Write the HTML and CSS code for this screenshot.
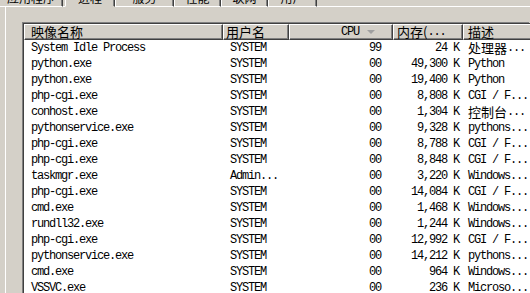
FILE: index.html
```html
<!DOCTYPE html>
<html lang="zh-CN">
<head>
<meta charset="utf-8">
<title>任务管理器 - 进程</title>
<link rel="stylesheet" href="styles.css">
</head>
<body>
<div class="tabbar">
  <div class="tab t1">应用程序</div>
  <div class="tab-gap"></div>
  <div class="tab t2 selected">进程</div>
  <div class="tab t3">服务</div>
  <div class="tab t4">性能</div>
  <div class="tab t5">联网</div>
  <div class="tab t6">用户</div>
  <div class="tab-fill"></div>
</div>
<div class="panel">
  <div class="list">
    <div class="header">
      <div class="hcell c-name"><span class="cjk">映像名称</span></div>
      <div class="hcell c-user"><span class="cjk">用户名</span></div>
      <div class="hcell c-cpu">CPU<span class="sort"></span></div>
      <div class="hcell c-mem"><span class="cjk">内存(</span>...</div>
      <div class="hcell c-desc"><span class="cjk">描述</span></div>
    </div>
    <div class="rows">
      <div class="row"><span class="c-name">System Idle Process</span><span class="c-user">SYSTEM</span><span class="c-cpu">99</span><span class="c-mem">24 K</span><span class="c-desc"><span class="cjk">处理器</span>...</span></div>
      <div class="row"><span class="c-name">python.exe</span><span class="c-user">SYSTEM</span><span class="c-cpu">00</span><span class="c-mem">49,300 K</span><span class="c-desc">Python</span></div>
      <div class="row"><span class="c-name">python.exe</span><span class="c-user">SYSTEM</span><span class="c-cpu">00</span><span class="c-mem">19,400 K</span><span class="c-desc">Python</span></div>
      <div class="row"><span class="c-name">php-cgi.exe</span><span class="c-user">SYSTEM</span><span class="c-cpu">00</span><span class="c-mem">8,808 K</span><span class="c-desc">CGI / F...</span></div>
      <div class="row"><span class="c-name">conhost.exe</span><span class="c-user">SYSTEM</span><span class="c-cpu">00</span><span class="c-mem">1,304 K</span><span class="c-desc"><span class="cjk">控制台</span>...</span></div>
      <div class="row"><span class="c-name">pythonservice.exe</span><span class="c-user">SYSTEM</span><span class="c-cpu">00</span><span class="c-mem">9,328 K</span><span class="c-desc">pythons...</span></div>
      <div class="row"><span class="c-name">php-cgi.exe</span><span class="c-user">SYSTEM</span><span class="c-cpu">00</span><span class="c-mem">8,788 K</span><span class="c-desc">CGI / F...</span></div>
      <div class="row"><span class="c-name">php-cgi.exe</span><span class="c-user">SYSTEM</span><span class="c-cpu">00</span><span class="c-mem">8,848 K</span><span class="c-desc">CGI / F...</span></div>
      <div class="row"><span class="c-name">taskmgr.exe</span><span class="c-user">Admin...</span><span class="c-cpu">00</span><span class="c-mem">3,220 K</span><span class="c-desc">Windows...</span></div>
      <div class="row"><span class="c-name">php-cgi.exe</span><span class="c-user">SYSTEM</span><span class="c-cpu">00</span><span class="c-mem">14,084 K</span><span class="c-desc">CGI / F...</span></div>
      <div class="row"><span class="c-name">cmd.exe</span><span class="c-user">SYSTEM</span><span class="c-cpu">00</span><span class="c-mem">1,468 K</span><span class="c-desc">Windows...</span></div>
      <div class="row"><span class="c-name">rundll32.exe</span><span class="c-user">SYSTEM</span><span class="c-cpu">00</span><span class="c-mem">1,244 K</span><span class="c-desc">Windows...</span></div>
      <div class="row"><span class="c-name">php-cgi.exe</span><span class="c-user">SYSTEM</span><span class="c-cpu">00</span><span class="c-mem">12,992 K</span><span class="c-desc">CGI / F...</span></div>
      <div class="row"><span class="c-name">pythonservice.exe</span><span class="c-user">SYSTEM</span><span class="c-cpu">00</span><span class="c-mem">14,212 K</span><span class="c-desc">pythons...</span></div>
      <div class="row"><span class="c-name">cmd.exe</span><span class="c-user">SYSTEM</span><span class="c-cpu">00</span><span class="c-mem">964 K</span><span class="c-desc">Windows...</span></div>
      <div class="row"><span class="c-name">VSSVC.exe</span><span class="c-user">SYSTEM</span><span class="c-cpu">00</span><span class="c-mem">236 K</span><span class="c-desc">Microso...</span></div>
    </div>
  </div>
</div>
</body>
</html>
```

FILE: styles.css
```css
html, body {
  margin: 0;
  padding: 0;
}
body {
  width: 530px;
  height: 293px;
  overflow: hidden;
  background: #d4d0c8;
  font-family: "Liberation Mono", "DejaVu Sans Mono", monospace;
  font-size: 12px;
  color: #000;
}
.cjk {
  font-family: "Noto Sans CJK SC", sans-serif;
  font-size: 13px;
  letter-spacing: 0;
}

/* tabs (cut off at top of the window) */
.tabbar {
  display: flex;
  margin-top: -14px;
  height: 21px;
}
.tab {
  box-sizing: border-box;
  height: 21px;
  padding-top: 5px;
  line-height: 14px;
  text-align: center;
  font-family: "Noto Sans CJK SC", sans-serif;
  font-size: 12px;
  border-left: 1px solid #fff;
  border-right: 1px solid #404040;
  border-bottom: 1px solid #fff;
  box-shadow: inset -1px 0 #808080;
}
.tab-gap {
  width: 2px;
  border-bottom: 1px solid #fff;
}
.t1 { width: 63px; border-left: 0; }
.t2 { width: 50px; }
.t3 { width: 59px; }
.t4 { width: 47px; }
.t5 { width: 47px; }
.t6 { width: 49px; }
.tab.selected {
  border-bottom-color: #d4d0c8;
}
.tab-fill {
  flex: 1;
  border-bottom: 1px solid #fff;
}

/* panel */
.panel {
  margin-left: 5px;
  border-left: 1px solid #fff;
  padding: 16px 0 0 17px;
  height: 270px;
}
.list {
  background: #fff;
  border-top: 1px solid #404040;
  border-left: 1px solid #404040;
  box-shadow: -1px -1px 0 #808080;
  height: 270px;
}
.header, .row {
  display: grid;
  grid-template-columns: 199px 66px 104px 70px 90px;
}
.hcell {
  box-sizing: border-box;
  height: 16px;
  line-height: 14px;
  background: #d4d0c8;
  border-top: 1px solid #fff;
  border-left: 1px solid #fff;
  border-right: 1px solid #404040;
  border-bottom: 1px solid #404040;
  box-shadow: inset -1px -1px #808080;
  white-space: nowrap;
  overflow: hidden;
  letter-spacing: -1.2px;
}
.hcell .cjk {
  line-height: 14px;
  vertical-align: top;
}
.hcell.c-name { padding-left: 6px; }
.hcell.c-user { padding-left: 2px; }
.hcell.c-cpu {
  text-align: right;
  padding-right: 33px;
  position: relative;
}
.hcell.c-mem { padding-left: 3px; }
.hcell.c-desc { padding-left: 4px; border-right: 0; }
.sort {
  position: absolute;
  right: 17px;
  top: 5px;
  width: 0;
  height: 0;
  border-left: 4px solid transparent;
  border-right: 4px solid transparent;
  border-top: 4px solid #a0a0a0;
}

.row {
  height: 16px;
  line-height: 16px;
  white-space: pre;
  letter-spacing: -1.2px;
}
.row > span {
  overflow: hidden;
  height: 16px;
}
.row .cjk {
  line-height: 16px;
  vertical-align: top;
}
.row .c-name { padding-left: 7px; }
.row .c-user { padding-left: 7px; }
.row .c-cpu { text-align: right; padding-right: 12px; }
.row .c-mem { text-align: right; padding-right: 4px; }
.row .c-desc { padding-left: 5px; }
```
